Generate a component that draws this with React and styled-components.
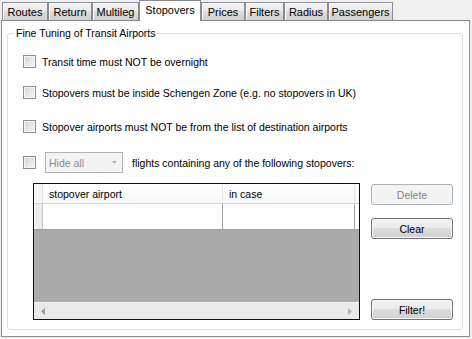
import React from "react";
import styled, { createGlobalStyle } from "styled-components";

const GlobalStyle = createGlobalStyle`
  html, body {
    margin: 0;
    padding: 0;
    background: #f0f0f0;
  }
  body {
    font-family: "Liberation Sans", Arial, sans-serif;
    font-size: 10.5px;
    color: #000;
  }
`;

const tabs = [
  { label: "Routes", width: 46 },
  { label: "Return", width: 44 },
  { label: "Multileg", width: 47 },
  { label: "Stopovers", width: 62, active: true },
  { label: "Prices", width: 44 },
  { label: "Filters", width: 39 },
  { label: "Radius", width: 44 },
  { label: "Passengers", width: 65 },
];

const options = [
  { text: "Transit time must NOT be overnight", mt: 11 },
  { text: "Stopovers must be inside Schengen Zone (e.g. no stopovers in UK)", mt: 10 },
  { text: "Stopover airports must NOT be from the list of destination airports", mt: 13 },
];

export default function App() {
  return (
    <>
      <GlobalStyle />
      <Window>
        <TabStrip>
          {tabs.map((t) => (
            <Tab key={t.label} $w={t.width} $active={t.active}>
              {t.label}
            </Tab>
          ))}
        </TabStrip>
        <Panel>
          <GroupBox>
            <Legend>Fine Tuning of Transit Airports</Legend>
            <Content>
              {options.map((o) => (
                <Row key={o.text} $mt={o.mt}>
                  <CheckBox />
                  <Label>{o.text}</Label>
                </Row>
              ))}
              <Row $mt={15}>
                <CheckBox />
                <Combo>
                  Hide all
                  <ComboArrow viewBox="0 0 5 3">
                    <path d="M0 0 L5 0 L2.5 3 Z" fill="#b8b8b8" />
                  </ComboArrow>
                </Combo>
                <ComboLabel>flights containing any of the following stopovers:</ComboLabel>
              </Row>
              <Bottom>
                <Grid>
                  <HeaderRow>
                    <RowHeadCell $head />
                    <HeadCell $w={180}>stopover airport</HeadCell>
                    <HeadCell $w={132}>in case</HeadCell>
                    <Filler $head />
                  </HeaderRow>
                  <DataRow>
                    <RowHeadCell />
                    <DataCell $w={180} />
                    <DataCell $w={132} />
                    <Filler />
                  </DataRow>
                  <EmptyArea />
                  <HScroll>
                    <svg width="4" height="7" viewBox="0 0 4 7">
                      <path d="M4 0 L0 3.5 L4 7 Z" fill="#9a9a9a" />
                    </svg>
                    <svg width="4" height="7" viewBox="0 0 4 7">
                      <path d="M0 0 L4 3.5 L0 7 Z" fill="#b5b5b5" />
                    </svg>
                  </HScroll>
                </Grid>
                <Buttons>
                  <Button disabled>Delete</Button>
                  <Button $mt={13}>Clear</Button>
                  <Button $push>Filter!</Button>
                </Buttons>
              </Bottom>
            </Content>
          </GroupBox>
        </Panel>
      </Window>
    </>
  );
}

const Window = styled.div`
  width: 472px;
  height: 339px;
  box-sizing: border-box;
  padding: 0 2px 2px 1px;
  display: flex;
  flex-direction: column;
  background: #f0f0f0;
`;

const TabStrip = styled.div`
  display: flex;
  align-items: flex-end;
  height: 20px;
  padding-left: 1px;
  flex-shrink: 0;
`;

const Tab = styled.div`
  box-sizing: border-box;
  width: ${({ $w }) => $w}px;
  height: ${({ $active }) => ($active ? 21 : 18)}px;
  margin-bottom: ${({ $active }) => ($active ? -1 : 0)}px;
  padding-bottom: ${({ $active }) => ($active ? 2 : 0)}px;
  border: 1px solid #898c95;
  border-bottom: none;
  font-size: 11px;
  background: ${({ $active }) =>
    $active ? "#fff" : "linear-gradient(#f2f2f2, #ebebeb 45%, #dddddd 50%, #cfcfcf)"};
  box-shadow: ${({ $active }) => ($active ? "none" : "inset 1px 1px 0 #fcfcfc")};
  display: flex;
  align-items: center;
  justify-content: center;
  white-space: nowrap;
  position: relative;
  z-index: ${({ $active }) => ($active ? 1 : 0)};
`;

const Panel = styled.div`
  flex: 1;
  box-sizing: border-box;
  width: 469px;
  border: 1px solid #898c95;
  background: #fff;
  padding: 5px 6px 6px 5px;
  display: flex;
  flex-direction: column;
`;

const GroupBox = styled.fieldset`
  flex: 1;
  margin: 0;
  padding: 0;
  min-width: 0;
  border: 1px solid #d5dfe5;
  border-radius: 3px;
  box-shadow: inset 1px 1px 0 #fff;
`;

const Legend = styled.legend`
  margin-left: 6px;
  padding: 0 2px;
  line-height: 14px;
  font-size: 10.5px;
`;

const Content = styled.div`
  padding-left: 15px;
  display: flex;
  flex-direction: column;
`;

const Row = styled.div`
  display: flex;
  align-items: center;
  height: 21px;
  margin-top: ${({ $mt }) => $mt}px;
`;

const CheckBox = styled.span`
  box-sizing: border-box;
  width: 13px;
  height: 13px;
  border: 1px solid #8e8f8f;
  background: linear-gradient(135deg, #d3d5d8, #f0f0f0 80%);
  box-shadow: inset 0 0 0 1px #f6f6f6;
  flex-shrink: 0;
`;

const Label = styled.span`
  margin-left: 6px;
  white-space: nowrap;
`;

const Combo = styled.div`
  box-sizing: border-box;
  width: 78px;
  height: 21px;
  margin-left: 9px;
  border: 1px solid #b3b3b3;
  background: #f4f4f4;
  color: #8d8d8d;
  padding-left: 3px;
  display: flex;
  align-items: center;
  justify-content: space-between;
  padding-right: 5px;
`;

const ComboArrow = styled.svg`
  width: 5px;
  height: 3px;
`;

const ComboLabel = styled.span`
  margin-left: 9px;
  white-space: nowrap;
`;

const Bottom = styled.div`
  display: flex;
  margin-top: 10px;
  margin-left: 10px;
`;

const Grid = styled.div`
  box-sizing: border-box;
  width: 327px;
  height: 137px;
  border: 1px solid #101010;
  display: flex;
  flex-direction: column;
  background: #ababab;
`;

const HeaderRow = styled.div`
  display: flex;
  height: 20px;
  box-sizing: border-box;
  border-bottom: 1px solid #d5d5d5;
  background: linear-gradient(#ffffff, #f7f8fa);
`;

const RowHeadCell = styled.div`
  width: 9px;
  box-sizing: border-box;
  flex-shrink: 0;
  border-right: 1px solid ${({ $head }) => ($head ? "#e3e4e6" : "#c8c8c8")};
  border-left: 1px solid #fff;
  background: ${({ $head }) => ($head ? "#f5f5f5" : "#ececec")};
`;

const HeadCell = styled.div`
  width: ${({ $w }) => $w}px;
  box-sizing: border-box;
  flex-shrink: 0;
  padding-left: 6px;
  display: flex;
  align-items: center;
  border-right: 1px solid #e3e4e6;
  white-space: nowrap;
`;

const Filler = styled.div`
  flex: 1;
  background: ${({ $head }) => ($head ? "transparent" : "#fff")};
`;

const DataRow = styled.div`
  display: flex;
  height: 26px;
  box-sizing: border-box;
  border-bottom: 1px solid #a0a0a0;
  background: #fff;
`;

const DataCell = styled.div`
  width: ${({ $w }) => $w}px;
  box-sizing: border-box;
  flex-shrink: 0;
  border-right: 1px solid #a0a0a0;
  background: #fff;
`;

const EmptyArea = styled.div`
  flex: 1;
  background: #ababab;
`;

const HScroll = styled.div`
  height: 17px;
  flex-shrink: 0;
  box-sizing: border-box;
  border-top: 1px solid #f3f3f3;
  background: #eaeaea;
  display: flex;
  align-items: center;
  justify-content: space-between;
  padding: 0 7px 0 7px;
`;

const Buttons = styled.div`
  display: flex;
  flex-direction: column;
  margin-left: 11px;
  padding-top: 1px;
`;

const Button = styled.button`
  box-sizing: border-box;
  width: 82px;
  height: 21px;
  padding: 0;
  margin-top: ${({ $mt, $push }) => ($push ? "auto" : `${$mt || 0}px`)};
  font-family: "Liberation Sans", Arial, sans-serif;
  font-size: 10.5px;
  color: #000;
  border: 1px solid #707070;
  border-radius: 3px;
  background: linear-gradient(#f2f2f2, #ebebeb 45%, #dddddd 50%, #cfcfcf);
  box-shadow: inset 0 0 0 1px #fcfcfc;

  &:disabled {
    color: #838383;
    border-color: #adb2b5;
    background: #f4f4f4;
    box-shadow: none;
  }
`;
